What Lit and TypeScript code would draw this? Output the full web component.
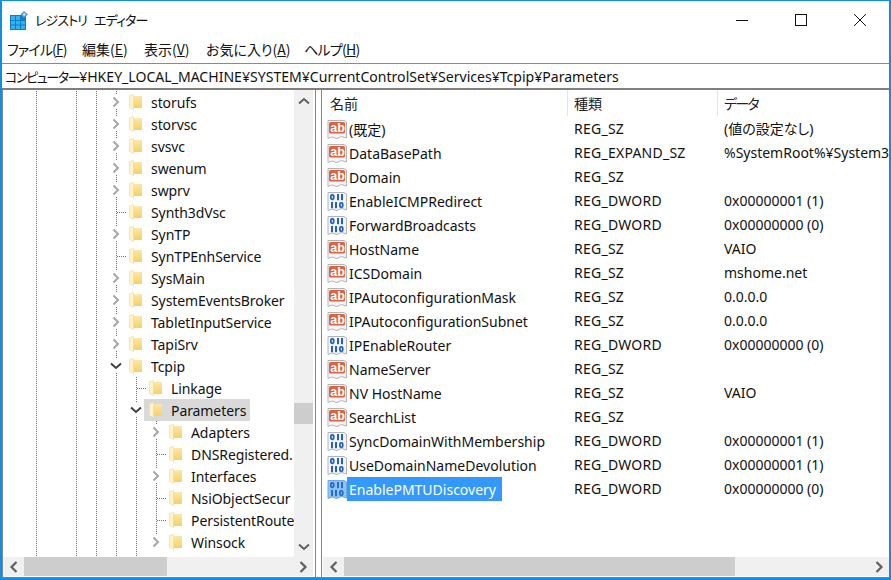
import { LitElement, html, css, svg } from "lit";
import { customElement } from "lit/decorators.js";

type Cell = "" | "v" | "r" | "d" | "t" | "re";
interface TreeRow { name: string; cells: Cell[]; sel?: boolean; }

const L0 = (name: string, c: Cell): TreeRow => ({ name, cells: ["v", "", "v", "v", c] });
const L1 = (name: string, c: Cell): TreeRow => ({ name, cells: ["v", "", "v", "v", "v", c] });
const L2 = (name: string, c: Cell): TreeRow => ({ name, cells: ["v", "", "v", "v", "v", "v", c] });

const treeRows: TreeRow[] = [
  L0("storufs", "r"), L0("storvsc", "r"), L0("svsvc", "r"), L0("swenum", "r"), L0("swprv", "r"),
  L0("Synth3dVsc", "t"), L0("SynTP", "r"), L0("SynTPEnhService", "t"), L0("SysMain", "r"),
  L0("SystemEventsBroker", "r"), L0("TabletInputService", "r"), L0("TapiSrv", "r"), L0("Tcpip", "d"),
  L1("Linkage", "t"), { ...L1("Parameters", "d"), sel: true },
  L2("Adapters", "r"), L2("DNSRegistered.", "t"), L2("Interfaces", "r"), L2("NsiObjectSecur", "t"),
  L2("PersistentRoute", "t"), L2("Winsock", "re"),
];

const values: [string, "s" | "b", string, string][] = [
  ["(既定)", "s", "REG_SZ", "(値の設定なし)"],
  ["DataBasePath", "s", "REG_EXPAND_SZ", "%SystemRoot%¥System32¥drivers¥etc"],
  ["Domain", "s", "REG_SZ", ""],
  ["EnableICMPRedirect", "b", "REG_DWORD", "0x00000001 (1)"],
  ["ForwardBroadcasts", "b", "REG_DWORD", "0x00000000 (0)"],
  ["HostName", "s", "REG_SZ", "VAIO"],
  ["ICSDomain", "s", "REG_SZ", "mshome.net"],
  ["IPAutoconfigurationMask", "s", "REG_SZ", "0.0.0.0"],
  ["IPAutoconfigurationSubnet", "s", "REG_SZ", "0.0.0.0"],
  ["IPEnableRouter", "b", "REG_DWORD", "0x00000000 (0)"],
  ["NameServer", "s", "REG_SZ", ""],
  ["NV HostName", "s", "REG_SZ", "VAIO"],
  ["SearchList", "s", "REG_SZ", ""],
  ["SyncDomainWithMembership", "b", "REG_DWORD", "0x00000001 (1)"],
  ["UseDomainNameDevolution", "b", "REG_DWORD", "0x00000001 (1)"],
  ["EnablePMTUDiscovery", "b", "REG_DWORD", "0x00000000 (0)"],
];

const folder = () => html`<svg class="folder" width="14" height="16" viewBox="0 0 14 16">
  <defs><linearGradient id="fg" x1="0" y1="0" x2="0" y2="1"><stop offset="0" stop-color="#fce7a8"/><stop offset="1" stop-color="#f6cf68"/></linearGradient></defs>
  <path d="M4 2 H13 V14 H4 Z" fill="url(#fg)"/>
  <path d="M0.5 1.5 L4.5 0.5 V15.5 L0.5 13.5 Z" fill="#fff3cc" stroke="#efdca0" stroke-width=".7"/>
</svg>`;

const chevR = (color = "#a6a6a6") => html`<svg class="chev" width="10" height="12" viewBox="0 0 10 12"><path d="M2.5 1.5 L7 6 L2.5 10.5" fill="none" stroke=${color} stroke-width="2"/></svg>`;
const chevD = (color = "#404040") => html`<svg class="chev" width="12" height="10" viewBox="0 0 12 10"><path d="M1 2.5 L6 7 L11 2.5" fill="none" stroke=${color} stroke-width="2"/></svg>`;
const chevU = (color = "#606060") => html`<svg class="chev" width="12" height="10" viewBox="0 0 12 10"><path d="M1 7.5 L6 3 L11 7.5" fill="none" stroke=${color} stroke-width="2"/></svg>`;
const chevL = (color = "#606060") => html`<svg class="chev" width="10" height="12" viewBox="0 0 10 12"><path d="M7.5 1 L2.5 6 L7.5 11" fill="none" stroke=${color} stroke-width="2.2"/></svg>`;
const chevRD = (color = "#606060") => html`<svg class="chev" width="10" height="12" viewBox="0 0 10 12"><path d="M2.5 1 L7.5 6 L2.5 11" fill="none" stroke=${color} stroke-width="2.2"/></svg>`;

const pagePath = "M1 0.5 H17 L19.5 2 V18 L14.5 16.5 L10 18.5 L5 17 L1 18.5 Z";
const zero = (x: number, y: number, c: string) => svg`<rect x=${x + 0.9} y=${y + 0.9} width="2.8" height="4.4" rx="1.2" fill="none" stroke=${c} stroke-width="1.8"/>`;
const one = (x: number, y: number, c: string) => svg`<rect x=${x} y=${y} width="2" height="6.2" fill=${c}/>`;

const iconS = () => html`<svg class="vicon" width="20" height="19" viewBox="0 0 20 19">
  <path d=${pagePath} fill="#f5f5f7" stroke="#b0b5bc"/>
  <rect x="2" y="2" width="16" height="11.5" rx="1.5" fill="#e4603f"/>
  <text x="3.2" y="11.7" font-family="Liberation Sans, sans-serif" font-size="12.5" font-weight="700" fill="#fff">ab</text>
</svg>`;
const iconB = (sel = false) => {
  const c = sel ? "#1f6fc8" : "#2460c8";
  return html`<svg class="vicon" width="20" height="19" viewBox="0 0 20 19">
    <path d=${pagePath} fill=${sel ? "#8fc3f5" : "#f5f5f7"} stroke=${sel ? "#6fa9e6" : "#b0b5bc"}/>
    ${zero(3, 2, c)}${one(10, 2, c)}${one(14, 2, c)}
    ${one(4, 10, c)}${one(8, 10, c)}${zero(12, 10, c)}
  </svg>`;
};

@customElement("app-root")
export class AppRoot extends LitElement {
  static styles = css`
    :host { display: block; width: 891px; height: 580px; font-family: "Noto Sans", "Noto Sans CJK JP", sans-serif; font-size: 14px; color: #111; font-feature-settings: "palt"; }
    .win { box-sizing: border-box; width: 891px; height: 580px; background: #fff; border: 2px solid #0f8fe4; border-top-width: 1px; display: flex; flex-direction: column; overflow: hidden; }
    .title { height: 38px; flex: none; display: flex; align-items: center; }
    .appicon { margin-left: 7px; margin-top: 2px; }
    .title-text { margin-left: 6px; margin-bottom: 1px; font-family: "Noto Sans CJK JP", sans-serif; font-size: 13px; letter-spacing: -.9px; word-spacing: 5px; flex: 1; }
    .winbtns { display: flex; }
    .winbtn { width: 59px; height: 36px; display: flex; align-items: center; justify-content: center; }
    .menu { height: 24px; flex: none; display: flex; align-items: center; font-family: "Noto Sans CJK JP", sans-serif; font-size: 14px; padding: 0 0 4px 5px; box-sizing: border-box; }
    .menu span { display: block; white-space: nowrap; }
    .m1 { width: 75px; letter-spacing: -.85px; } .m2 { width: 62px; } .m3 { width: 62px; } .m4 { width: 98px; }
    .m5 { letter-spacing: -.7px; }
    .addr { height: 27px; box-sizing: border-box; flex: none; border-top: 1px solid #8a8a8a; border-bottom: 2px solid #7f7f7f; display: flex; align-items: center; padding-left: 3px; font-size: 14.07px; white-space: nowrap; overflow: hidden; }
    .kana { font-size: 13px; letter-spacing: -1.4px; }
    .panes { flex: 1; min-height: 0; display: flex; gap: 5px; border-bottom: 1px solid #7f7f7f; }
    .pane { box-sizing: border-box; border-left: 1px solid #828790; display: flex; flex-direction: column; min-width: 0; }
    .left { width: 314px; flex: none; border-right: 1px solid #828790; padding-right: 2px; padding-bottom: 1px; }
    .right { flex: 1; padding-bottom: 1px; }
    .upper { flex: 1; min-height: 0; display: flex; }
    .tree { flex: 1; min-width: 0; overflow: hidden; padding: 1px 0 0 23px; }
    .trow { height: 22px; display: flex; align-items: center; white-space: nowrap; }
    .tfill { height: 4px; display: flex; }
    .cell { width: 20px; height: 100%; flex: none; position: relative; display: flex; align-items: center; justify-content: center; }
    .cell.v::before, .cell.t::before { content: ""; position: absolute; left: 10px; top: 0; bottom: 0; width: 1px; background: linear-gradient(#6d6d6d 50%, transparent 50%) 0 0 / 1px 2px repeat-y; }
    .cell.t::after { content: ""; position: absolute; left: 11px; top: 11px; width: 9px; height: 1px; background: linear-gradient(90deg, #6d6d6d 50%, transparent 50%) 0 0 / 2px 1px repeat-x; }
    .stub { position: absolute; left: 10px; width: 1px; height: 4px; background: linear-gradient(#6d6d6d 50%, transparent 50%) 0 0 / 1px 2px repeat-y; }
    .stub.top { top: 0; } .stub.bot { bottom: 0; }
    .chev { display: block; }
    .item { display: flex; align-items: center; height: 22px; margin-left: -2px; padding: 0 4px 0 5px; gap: 8px; flex: none; letter-spacing: -.08px; }
    .item.sel { background: #d9d9d9; }
    .folder { display: block; flex: none; }
    .vbar { width: 19px; flex: none; background: #f0f0f0; display: flex; flex-direction: column; align-items: center; }
    .varrow { height: 21px; flex: none; display: flex; align-items: center; justify-content: center; }
    .vtrack { flex: 1; align-self: stretch; padding-top: 292px; }
    .vthumb { height: 21px; background: #cdcdcd; }
    .hbar { height: 19px; flex: none; background: #f0f0f0; display: flex; }
    .harrow { width: 21px; flex: none; display: flex; align-items: center; justify-content: center; }
    .htrack { flex: 1; min-width: 0; }
    .hthumb { height: 19px; background: #cdcdcd; }
    .left .hthumb { width: 143px; }
    .right .hthumb { width: 391px; }
    .right .hbar { margin-left: 1px; }
    .list { flex: 1; min-height: 0; overflow: hidden; }
    .lrow { display: grid; grid-template-columns: 245px 150px 1fr; height: 24px; line-height: 24px; white-space: nowrap; }
    .lhead { height: 27px; }
    .lhead > div { height: 26px; line-height: 26px; color: #222; font-family: "Noto Sans CJK JP", sans-serif; font-size: 14px; box-sizing: border-box; }
    .lhead > div:first-child { padding-left: 8px; }
    .lhead > div + div { border-left: 1px solid #e5e5e5; padding-left: 6px; }
    .lhead > .h3 { letter-spacing: -1.8px; }
    .name { display: flex; align-items: center; padding-left: 5px; }
    .name .vicon { flex: none; display: block; }
    .vname { height: 24px; line-height: 24px; padding: 1px 2px 0; box-sizing: border-box; }
    .vname.sel { background: #3399ff; color: #fff; outline: 1px dotted #a97a50; outline-offset: -1px; padding-right: 6px; }
    .col2 { padding-left: 7px; letter-spacing: .25px; }
    .col3 { padding-left: 7px; overflow: hidden; }
  `;

  private cell(c: Cell) {
    if (c === "r" || c === "re" || c === "d") {
      return html`<div class="cell"><div class="stub top"></div>${c !== "re" ? html`<div class="stub bot"></div>` : ""}${c === "d" ? chevD() : chevR()}</div>`;
    }
    return html`<div class="cell ${c}"></div>`;
  }

  render() {
    return html`<div class="win">
      <div class="title">
        <svg class="appicon" width="20" height="20" viewBox="0 0 20 20">
          <rect x="1" y="4" width="16" height="15" fill="#0a7fc6"/>
          <g fill="#35b4ec">
            <rect x="2" y="5" width="4" height="4"/><rect x="7" y="5" width="4" height="4"/>
            <rect x="2" y="10" width="4" height="3.5"/><rect x="7" y="10" width="4" height="3.5"/><rect x="12" y="10" width="4" height="3.5"/>
            <rect x="2" y="14.5" width="4" height="3.5"/><rect x="7" y="14.5" width="4" height="3.5"/><rect x="12" y="14.5" width="4" height="3.5"/>
          </g>
          <path d="M15 0 L19 3.5 L15 7 L11.5 3.5 Z" fill="#4f9fd8"/><circle cx="15.2" cy="3.5" r="1.2" fill="#d8eefa"/>
        </svg>
        <div class="title-text">レジストリ エディター</div>
        <div class="winbtns">
          <div class="winbtn"><svg width="12" height="12" viewBox="0 0 12 12"><path d="M0 6.5 H12" stroke="#111"/></svg></div>
          <div class="winbtn"><svg width="12" height="12" viewBox="0 0 12 12"><rect x=".5" y=".5" width="11" height="11" fill="none" stroke="#111"/></svg></div>
          <div class="winbtn"><svg width="12" height="12" viewBox="0 0 12 12"><path d="M0 0 L12 12 M12 0 L0 12" stroke="#111"/></svg></div>
        </div>
      </div>
      <div class="menu">
        <span class="m1">ファイル(<u>F</u>)</span><span class="m2">編集(<u>E</u>)</span><span class="m3">表示(<u>V</u>)</span><span class="m4">お気に入り(<u>A</u>)</span><span class="m5">ヘルプ(<u>H</u>)</span>
      </div>
      <div class="addr"><span><span class="kana">コンピューター</span>¥HKEY_LOCAL_MACHINE¥SYSTEM¥CurrentControlSet¥Services¥Tcpip¥Parameters</span></div>
      <div class="panes">
        <div class="pane left">
          <div class="upper">
            <div class="tree">
              ${treeRows.map((r) => html`<div class="trow">
                ${r.cells.map((c) => this.cell(c))}
                <div class="item ${r.sel ? "sel" : ""}">${folder()}<span>${r.name}</span></div>
              </div>`)}
              <div class="tfill">${(["v", "", "v", "v", "v", "v"] as Cell[]).map((c) => this.cell(c))}</div>
            </div>
            <div class="vbar">
              <div class="varrow">${chevU("#606060")}</div>
              <div class="vtrack"><div class="vthumb"></div></div>
              <div class="varrow">${chevD("#606060")}</div>
            </div>
          </div>
          <div class="hbar">
            <div class="harrow">${chevL()}</div>
            <div class="htrack"><div class="hthumb"></div></div>
            <div class="harrow">${chevRD()}</div>
          </div>
        </div>
        <div class="pane right">
          <div class="list">
            <div class="lrow lhead"><div>名前</div><div>種類</div><div class="h3">データ</div></div>
            ${values.map(([n, t, ty, d], i) => {
              const sel = i === values.length - 1;
              return html`<div class="lrow">
                <div class="name">${t === "s" ? iconS() : iconB(sel)}<span class="vname ${sel ? "sel" : ""}">${n}</span></div>
                <div class="col2">${ty}</div>
                <div class="col3">${d}</div>
              </div>`;
            })}
          </div>
          <div class="hbar">
            <div class="harrow">${chevL()}</div>
            <div class="htrack"><div class="hthumb"></div></div>
            <div class="harrow">${chevRD()}</div>
          </div>
        </div>
      </div>
    </div>`;
  }
}
